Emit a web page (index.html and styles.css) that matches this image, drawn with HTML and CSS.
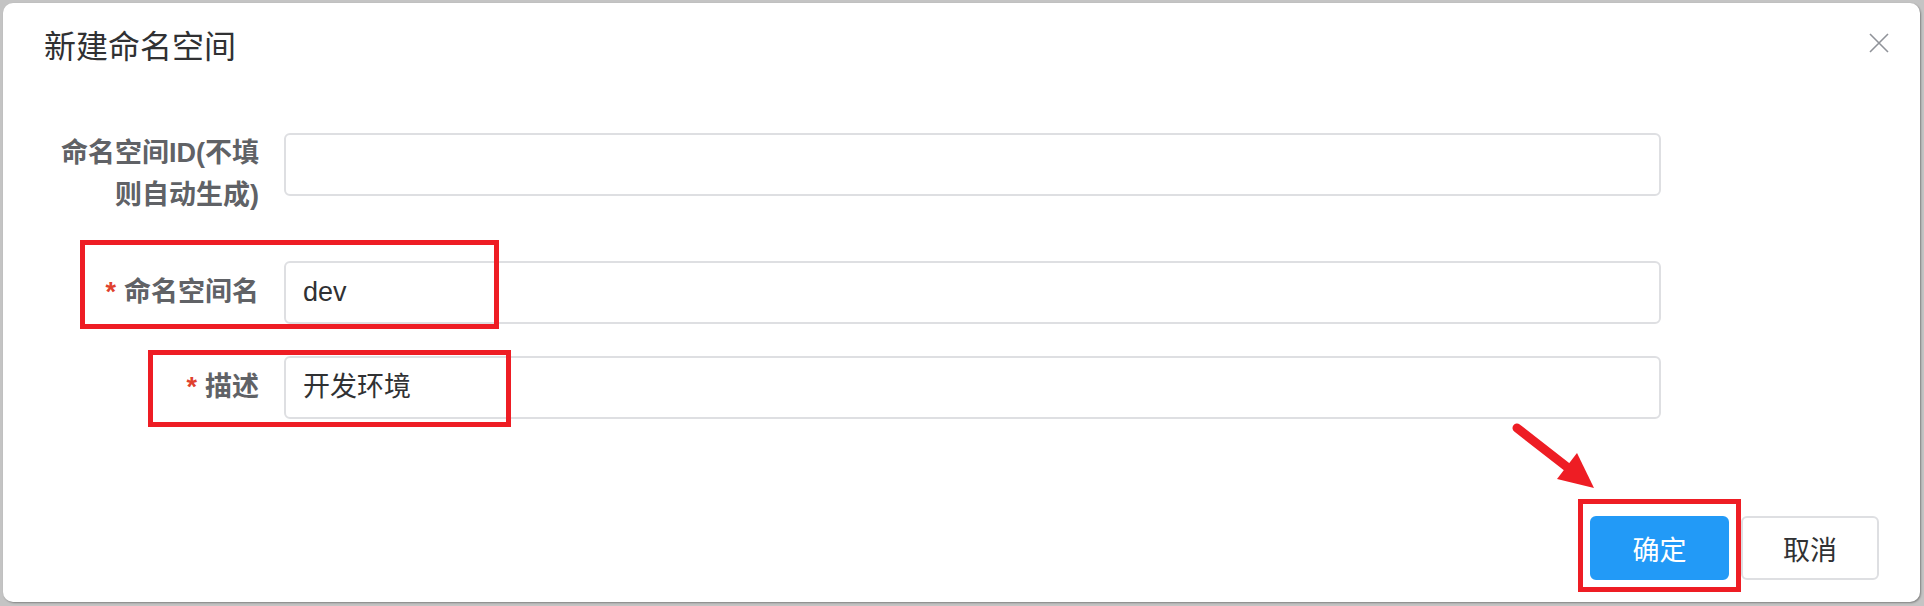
FILE: index.html
```html
<!DOCTYPE html>
<html lang="zh-CN">
<head>
<meta charset="utf-8">
<title>新建命名空间</title>
<link rel="stylesheet" href="styles.css">
</head>
<body>
<div class="dialog">
  <div class="dialog-header">
    <span class="dialog-title">新建命名空间</span>
    <button class="close-btn" aria-label="关闭">
      <svg width="20" height="20" viewBox="0 0 20 20"><path d="M1 1 L19 19 M19 1 L1 19" stroke="#909399" stroke-width="1.6" fill="none"/></svg>
    </button>
  </div>
  <div class="dialog-body">
    <div class="form-item">
      <label class="form-label tall">命名空间ID(不填则自动生成)</label>
      <div class="form-control"><div class="input"></div></div>
    </div>
    <div class="form-item">
      <label class="form-label"><span class="req">*</span>命名空间名</label>
      <div class="form-control"><div class="input">dev</div></div>
    </div>
    <div class="form-item">
      <label class="form-label"><span class="req">*</span>描述</label>
      <div class="form-control"><div class="input">开发环境</div></div>
    </div>
  </div>
  <div class="dialog-footer">
    <button class="btn btn-primary">确定</button>
    <button class="btn btn-default">取消</button>
  </div>
</div>

<div class="mark mark-name"></div>
<div class="mark mark-desc"></div>
<div class="mark mark-ok"></div>
<svg class="arrow" width="100" height="80" viewBox="0 0 100 80">
  <line x1="12" y1="13" x2="62" y2="52" stroke="#ee1d24" stroke-width="9" stroke-linecap="round"/>
  <polygon points="52,64 72,38 89,73" fill="#ee1d24"/>
</svg>
</body>
</html>
```

FILE: styles.css
```css
html, body {
  margin: 0;
  padding: 0;
}
body {
  width: 1924px;
  height: 606px;
  background: #c4c4c4;
  font-family: "Liberation Sans", "Noto Sans CJK SC", sans-serif;
  overflow: hidden;
  position: relative;
}
.dialog {
  margin: 3px 0 0 3px;
  width: 1917px;
  height: 599px;
  background: #ffffff;
  border-radius: 10px;
  box-shadow: 1px 1px 2px rgba(0,0,0,0.35);
  box-sizing: border-box;
}
.dialog-header {
  display: flex;
  justify-content: space-between;
  align-items: flex-start;
  padding: 22px 31px 0 41px;
}
.dialog-title {
  font-size: 32px;
  line-height: 44px;
  color: #303133;
}
.close-btn {
  margin-top: 8px;
  padding: 0;
  border: none;
  background: none;
  width: 20px;
  height: 20px;
  display: block;
}
.close-btn svg { display: block; }
.dialog-body {
  padding: 64px 259px 0 41px;
}
.form-item {
  display: flex;
  align-items: flex-start;
  margin-bottom: 32px;
}
.form-label {
  width: 240px;
  flex: 0 0 240px;
  box-sizing: border-box;
  padding-right: 25px;
  padding-left: 14px;
  text-align: right;
  font-size: 27px;
  font-weight: bold;
  color: #606266;
  line-height: 63px;
}
.form-label.tall {
  line-height: 42px;
  margin-top: -1px;
  padding-bottom: 13px;
}
.req {
  color: #e0412e;
  margin-right: 8px;
}
.form-control {
  flex: 1;
}
.input {
  height: 63px;
  box-sizing: border-box;
  border: 2px solid #dedfe2;
  border-radius: 6px;
  padding: 0 17px;
  font-size: 27px;
  line-height: 59px;
  color: #303133;
}
.dialog-footer {
  display: flex;
  justify-content: flex-end;
  gap: 12px;
  padding: 65px 41px 0 0;
}
.btn {
  height: 64px;
  box-sizing: border-box;
  border-radius: 6px;
  font-size: 27px;
  font-family: "Liberation Sans", "Noto Sans CJK SC", sans-serif;
  padding: 0;
}
.btn-primary {
  width: 139px;
  background: #229af7;
  border: 2px solid #229af7;
  color: #ffffff;
}
.btn-default {
  width: 138px;
  background: #ffffff;
  border: 2px solid #dedfe2;
  color: #303133;
}
.mark {
  position: absolute;
  border: 5px solid #ee1d24;
  box-sizing: border-box;
}
.mark-name { left: 80px; top: 240px; width: 419px; height: 89px; }
.mark-desc { left: 148px; top: 350px; width: 363px; height: 77px; }
.mark-ok { left: 1578px; top: 499px; width: 163px; height: 93px; }
.arrow {
  position: absolute;
  left: 1505px;
  top: 415px;
}
```
